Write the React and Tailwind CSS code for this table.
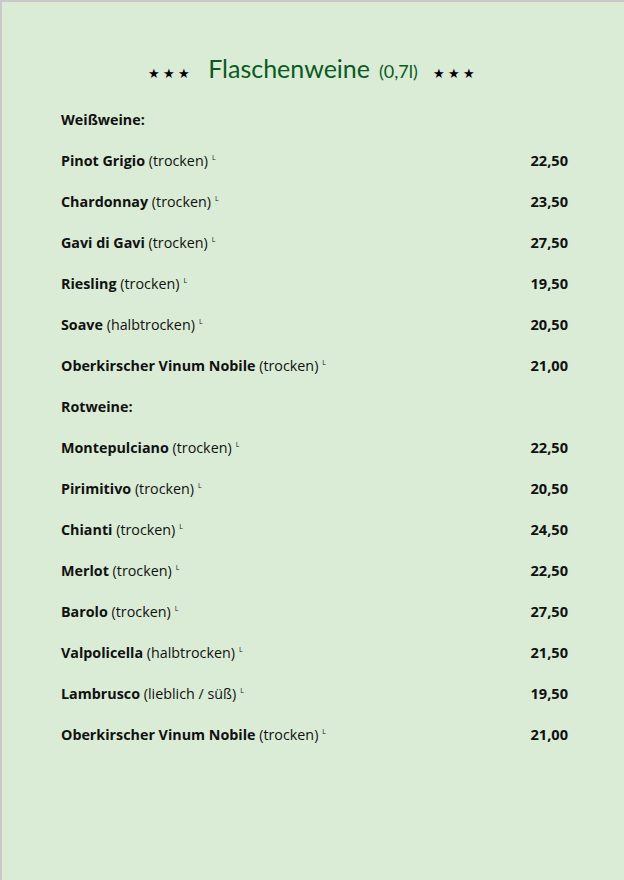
import React from "react";

const weiss = [
  ["Pinot Grigio", "(trocken)", "22,50"],
  ["Chardonnay", "(trocken)", "23,50"],
  ["Gavi di Gavi", "(trocken)", "27,50"],
  ["Riesling", "(trocken)", "19,50"],
  ["Soave", "(halbtrocken)", "20,50"],
  ["Oberkirscher Vinum Nobile", "(trocken)", "21,00"],
];
const rot = [
  ["Montepulciano", "(trocken)", "22,50"],
  ["Pirimitivo", "(trocken)", "20,50"],
  ["Chianti", "(trocken)", "24,50"],
  ["Merlot", "(trocken)", "22,50"],
  ["Barolo", "(trocken)", "27,50"],
  ["Valpolicella", "(halbtrocken)", "21,50"],
  ["Lambrusco", "(lieblich / süß)", "19,50"],
  ["Oberkirscher Vinum Nobile", "(trocken)", "21,00"],
];

function Row({ name, note, price }) {
  return (
    <div className="flex h-[41px] items-center justify-between">
      <div className="text-[14.3px] text-[#111]">
        <span className="font-bold">{name}</span> <span>{note}</span>
        <span className="relative top-[-6px] ml-[4px] text-[7px]">L</span>
      </div>
      <div className="text-[14.6px] font-bold text-[#111]">{price}</div>
    </div>
  );
}

export default function App() {
  return (
    <div className="h-[880px] w-[624px] border-l-2 border-t-2 border-[#c9c9c9] bg-[#daecd6] font-['Open_Sans',sans-serif]">
      <div className="flex items-baseline justify-center pt-[48px] font-['Lato',sans-serif]">
        <span className="mr-[15px] text-[13px] tracking-[3px] text-black">★★★</span>
        <span className="text-[25px] text-[#0a5a22]">Flaschenweine</span>
        <span className="ml-[9px] text-[18px] text-[#0a5a22]">(0,7l)</span>
        <span className="ml-[15px] text-[13px] tracking-[3px] text-black">★★★</span>
      </div>
      <div className="mt-[12px] pl-[59px] pr-[56px]">
        <div className="flex h-[41px] items-center text-[14.3px] font-bold text-[#111]">Weißweine:</div>
        {weiss.map((r, i) => (
          <Row key={"w" + i} name={r[0]} note={r[1]} price={r[2]} />
        ))}
        <div className="flex h-[41px] items-center text-[14.3px] font-bold text-[#111]">Rotweine:</div>
        {rot.map((r, i) => (
          <Row key={"r" + i} name={r[0]} note={r[1]} price={r[2]} />
        ))}
      </div>
    </div>
  );
}
